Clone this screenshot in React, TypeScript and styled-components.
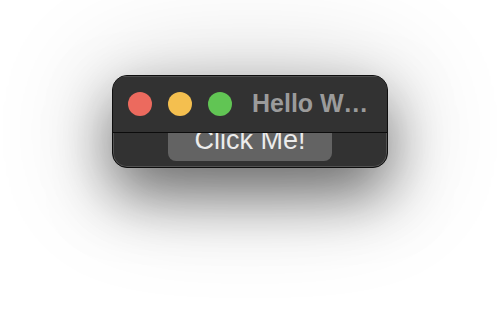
import styled, { createGlobalStyle } from 'styled-components'

const GlobalStyle = createGlobalStyle`
	html, body {
		margin: 0;
		padding: 0;
		background: #ffffff;
	}
	body {
		font-family: 'Liberation Sans', Arial, sans-serif;
	}
`

const Desktop = styled.div`
	width: 500px;
	height: 316px;
	display: flex;
	justify-content: center;
	align-items: flex-start;
	padding-top: 75px;
	box-sizing: border-box;
	overflow: hidden;
`

const Window = styled.div`
	width: 276px;
	height: 93px;
	box-sizing: border-box;
	display: flex;
	flex-direction: column;
	background: #323232;
	border: 1px solid #0e0e0e;
	border-radius: 15px;
	overflow: hidden;
	box-shadow:
		inset 0 0 0 1px rgba(255, 255, 255, 0.16),
		0 26px 60px rgba(0, 0, 0, 0.52),
		0 10px 120px rgba(0, 0, 0, 0.24);
`

const TitleBar = styled.div`
	position: relative;
	z-index: 1;
	flex: 0 0 56px;
	display: flex;
	align-items: center;
	gap: 20px;
	padding: 0 10px 0 15px;
	background: #323232;
	border-bottom: 1px solid #0c0c0c;
	box-shadow: inset 0 1px 0 rgba(255, 255, 255, 0.14);
`

const Lights = styled.div`
	display: flex;
	gap: 16px;
	flex: 0 0 auto;
`

const Light = styled.span<{ $color: string }>`
	width: 24px;
	height: 24px;
	border-radius: 50%;
	background: ${(p) => p.$color};
`

const Title = styled.div`
	flex: 1;
	min-width: 0;
	font-size: 25px;
	font-weight: bold;
	color: #9b9b9b;
	white-space: nowrap;
	overflow: hidden;
	text-overflow: ellipsis;
	margin-top: -2px;
`

const Content = styled.div`
	display: flex;
	justify-content: center;
	margin-top: -17px;
`

const Button = styled.button`
	width: 164px;
	height: 45px;
	border: none;
	border-radius: 8px;
	background: #636363;
	color: #ececec;
	font-family: 'Liberation Sans', Arial, sans-serif;
	font-size: 27px;
	padding: 0;
	padding-top: 4px;
`

function App() {
	return (
		<>
			<GlobalStyle />
			<Desktop>
				<Window>
					<TitleBar>
						<Lights>
							<Light $color="#ec6a5e" />
							<Light $color="#f4bf4f" />
							<Light $color="#61c554" />
						</Lights>
						<Title>Hello World</Title>
					</TitleBar>
					<Content>
						<Button>Click Me!</Button>
					</Content>
				</Window>
			</Desktop>
		</>
	)
}

export default App
